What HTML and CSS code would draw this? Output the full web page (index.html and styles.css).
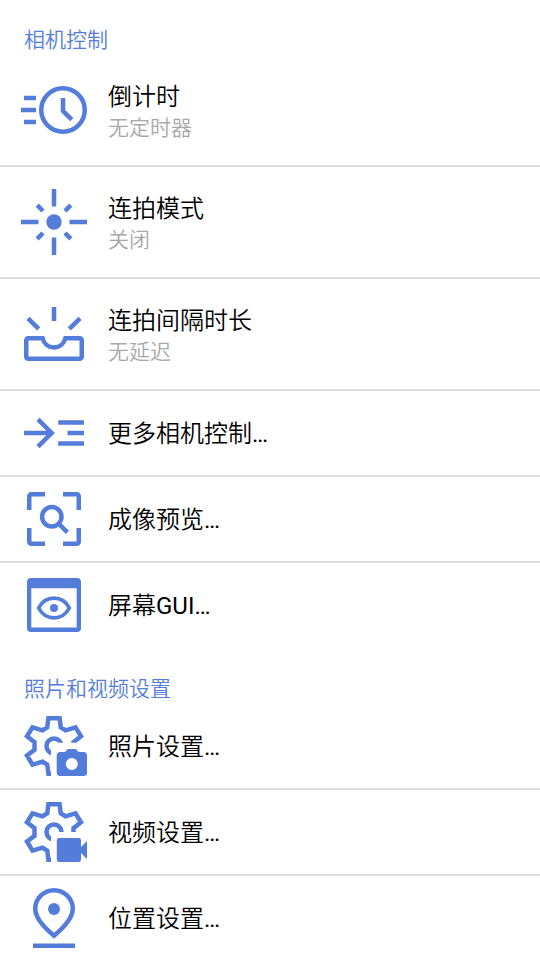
FILE: index.html
```html
<!DOCTYPE html>
<html lang="zh-CN">
<head>
<meta charset="utf-8">
<meta name="viewport" content="width=device-width, initial-scale=1">
<title>相机控制</title>
<link rel="stylesheet" href="styles.css">
</head>
<body>
<main class="settings">
  <section class="group">
    <h2 class="group-title">相机控制</h2>
    <ul class="list">
      <li class="item">
        <button class="row row-tall" type="button">
          <svg class="icon" viewBox="0 0 72 72" aria-hidden="true">
            <circle cx="45" cy="36" r="21.75"/>
            <path d="M6 24h12M3 36h15M6 48h12M45 24v13l8.8 8.6"/>
          </svg>
          <span class="text"><span class="title">倒计时</span><span class="value">无定时器</span></span>
        </button>
      </li>
      <li class="item">
        <button class="row row-tall" type="button">
          <svg class="icon" viewBox="0 0 72 72" aria-hidden="true">
            <circle class="solid" cx="36" cy="36" r="7.7"/>
            <path d="M36 3v17.5M36 51.5V69M3 36h17.5M51.5 36H69M19.2 19.2l5.8 5.8M52.8 19.2l-5.8 5.8M19.2 52.8l5.8-5.8M52.8 52.8l-5.8-5.8"/>
          </svg>
          <span class="text"><span class="title">连拍模式</span><span class="value">关闭</span></span>
        </button>
      </li>
      <li class="item">
        <button class="row row-tall" type="button">
          <svg class="icon" viewBox="0 0 72 72" aria-hidden="true">
            <path d="M36 9v14M10 20.3l10.7 10.5M62 20.3L51.3 30.8"/>
            <path d="M24.6 40.25C26 46 30.5 49.5 36 49.5S46 46 47.4 40.25H61.75a2 2 0 0 1 2 2v16.5a2 2 0 0 1-2 2H10.25a2 2 0 0 1-2-2v-16.5a2 2 0 0 1 2-2z"/>
          </svg>
          <span class="text"><span class="title">连拍间隔时长</span><span class="value">无延迟</span></span>
        </button>
      </li>
      <li class="item">
        <button class="row" type="button">
          <svg class="icon" viewBox="0 0 72 72" aria-hidden="true">
            <path d="M6 36h27M20 22.3L33.7 36 20 49.7M40.2 25.5H66M49.5 36H66M40.2 46.5H66"/>
          </svg>
          <span class="text"><span class="title">更多相机控制<span class="latin">…</span></span></span>
        </button>
      </li>
      <li class="item">
        <button class="row" type="button">
          <svg class="icon" viewBox="0 0 72 72" aria-hidden="true">
            <path d="M11.25 27V13.25a2 2 0 0 1 2-2H27M45 11.25h13.75a2 2 0 0 1 2 2V27M60.75 45v13.75a2 2 0 0 1-2 2H45M27 60.75H13.25a2 2 0 0 1-2-2V45"/>
            <circle cx="33.8" cy="33.8" r="9.7"/>
            <path d="M40.5 40.5l8.9 8.9"/>
          </svg>
          <span class="text"><span class="title">成像预览<span class="latin">…</span></span></span>
        </button>
      </li>
      <li class="item">
        <button class="row" type="button">
          <svg class="icon" viewBox="0 0 72 72" aria-hidden="true">
            <path class="solid" fill-rule="evenodd" d="M13 9h46a4 4 0 0 1 4 4v46a4 4 0 0 1-4 4H13a4 4 0 0 1-4-4V13a4 4 0 0 1 4-4zM13.3 19.3v39.2h45.4V19.3z"/>
            <path class="thin" d="M20.7 39C24 32.5 30 29.2 36 29.2S48 32.5 51.3 39C48 45.5 42 48.8 36 48.8S24 45.5 20.7 39z"/>
            <circle class="solid" cx="36" cy="39" r="4"/>
          </svg>
          <span class="text"><span class="title">屏幕<span class="latin">GUI…</span></span></span>
        </button>
      </li>
    </ul>
  </section>
  <section class="group">
    <h2 class="group-title">照片和视频设置</h2>
    <ul class="list">
      <li class="item">
        <button class="row" type="button">
          <svg class="icon" viewBox="0 0 72 72" aria-hidden="true">
            <clipPath id="photo-cut"><path d="M0 0h72v32.7H33V72H0z"/></clipPath>
            <g clip-path="url(#photo-cut)">
              <path d="M30.4 8.3H41.6L42.8 17.5 47.5 20.3 57.5 17.3 63 26.3 55.5 32.2V39.8L63 45.5 57.5 54.7 47.5 51.7 42.8 54.5 41.6 63.7H30.4L29.2 54.5 24.5 51.7 14.5 54.7 9 45.5 16.5 39.8V32.2L9 26.3 14.5 17.3 24.5 20.3 29.2 17.5z"/>
              <circle cx="36" cy="36" r="7.5"/>
            </g>
            <path class="solid" fill-rule="evenodd" d="M42.2 42H47l2.8-3h8l2.8 3h4.9a3.5 3.5 0 0 1 3.5 3.5v17a3.5 3.5 0 0 1-3.5 3.5H42.2a3.5 3.5 0 0 1-3.5-3.5v-17a3.5 3.5 0 0 1 3.5-3.5zM53.8 48a6 6 0 1 0 0 12 6 6 0 0 0 0-12z"/>
          </svg>
          <span class="text"><span class="title">照片设置<span class="latin">…</span></span></span>
        </button>
      </li>
      <li class="item">
        <button class="row" type="button">
          <svg class="icon" viewBox="0 0 72 72" aria-hidden="true">
            <clipPath id="video-cut"><path d="M0 0h72v36H33V72H0z"/></clipPath>
            <g clip-path="url(#video-cut)">
              <path d="M30.4 8.3H41.6L42.8 17.5 47.5 20.3 57.5 17.3 63 26.3 55.5 32.2V39.8L63 45.5 57.5 54.7 47.5 51.7 42.8 54.5 41.6 63.7H30.4L29.2 54.5 24.5 51.7 14.5 54.7 9 45.5 16.5 39.8V32.2L9 26.3 14.5 17.3 24.5 20.3 29.2 17.5z"/>
              <circle cx="36" cy="36" r="7.5"/>
            </g>
            <path class="solid" d="M41 42h19.8a2.2 2.2 0 0 1 2.2 2.2V51l6-6v18l-6-6v6.8a2.2 2.2 0 0 1-2.2 2.2H41a2.2 2.2 0 0 1-2.2-2.2V44.2A2.2 2.2 0 0 1 41 42z"/>
          </svg>
          <span class="text"><span class="title">视频设置<span class="latin">…</span></span></span>
        </button>
      </li>
      <li class="item">
        <button class="row" type="button">
          <svg class="icon" viewBox="0 0 72 72" aria-hidden="true">
            <path d="M36 53.7C23 43 17.25 34 17.25 26.8a18.75 18.6 0 0 1 37.5 0C54.75 34 49 43 36 53.7zM15 63.7h42"/>
            <circle class="solid" cx="36" cy="27" r="6"/>
          </svg>
          <span class="text"><span class="title">位置设置<span class="latin">…</span></span></span>
        </button>
      </li>
    </ul>
  </section>
</main>
</body>
</html>
```
FILE: styles.css
```css
:root {
  --accent: #547ddb;
  --line: #dedede;
  --muted: #a8a8a8;
}

* {
  box-sizing: border-box;
}

body {
  margin: 0;
  background: #fff;
  color: #000;
  font-family: Roboto, "Noto Sans CJK SC", sans-serif;
  font-weight: 350;
}

.group + .group {
  margin-top: 2px;
}

.group-title {
  margin: 0;
  padding: 25px 24px 0;
  color: var(--accent);
  font-size: 21px;
  font-weight: inherit;
  line-height: 30px;
}

.list {
  margin: 0;
  padding: 0;
  list-style: none;
}

.item + .item {
  border-top: 2px solid var(--line);
}

.row {
  display: flex;
  align-items: center;
  gap: 18px;
  width: 100%;
  min-height: 84px;
  padding: 0 18px;
  border: 0;
  background: none;
  color: inherit;
  font: inherit;
  font-size: 24px;
  line-height: 32px;
  text-align: left;
  cursor: pointer;
}

.row-tall {
  min-height: 110px;
}

.text {
  display: flex;
  flex-direction: column;
  min-width: 0;
  padding-top: 2px;
}

.row-tall .text {
  padding-top: 4px;
}

.latin {
  font-weight: 400;
}

.value {
  color: var(--muted);
  font-size: 21px;
  line-height: 30px;
}

.icon {
  flex: none;
  width: 72px;
  height: 72px;
  fill: none;
  stroke: var(--accent);
  stroke-width: 4.5;
}

.icon .solid {
  fill: var(--accent);
  stroke: none;
}

.icon .thin {
  stroke-width: 3.7;
}
```
